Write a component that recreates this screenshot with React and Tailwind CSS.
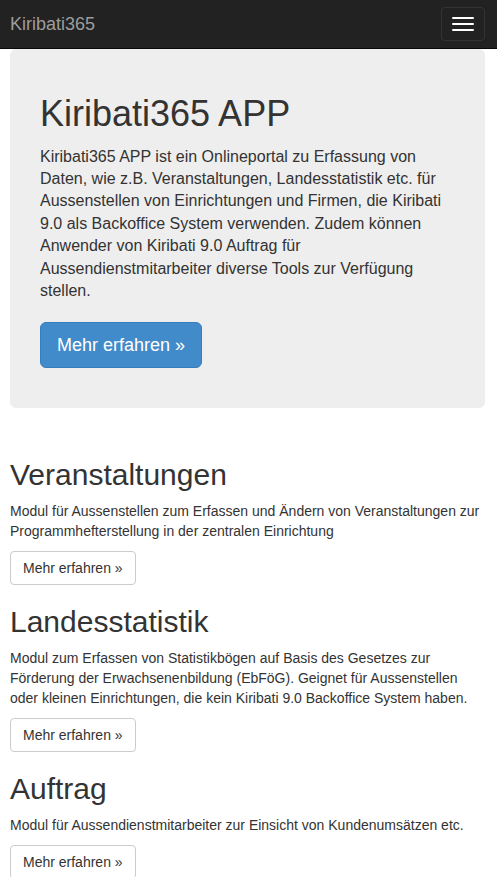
const modules = [
  {
    title: "Veranstaltungen",
    text: "Modul für Aussenstellen zum Erfassen und Ändern von Veranstaltungen zur Programmhefterstellung in der zentralen Einrichtung",
  },
  {
    title: "Landesstatistik",
    text: "Modul zum Erfassen von Statistikbögen auf Basis des Gesetzes zur Förderung der Erwachsenenbildung (EbFöG). Geignet für Aussenstellen oder kleinen Einrichtungen, die kein Kiribati 9.0 Backoffice System haben.",
  },
  {
    title: "Auftrag",
    text: "Modul für Aussendienstmitarbeiter zur Einsicht von Kundenumsätzen etc.",
  },
];

function Navbar() {
  return (
    <nav className="flex h-[49px] items-center justify-between border-b border-[#080808] bg-[#222] pl-[10px] pr-[12px]">
      <a href="#" className="text-[18px] leading-[20px] text-[#9d9d9d]">
        Kiribati365
      </a>
      <button
        type="button"
        className="flex h-[34px] w-[44px] flex-col items-center justify-center gap-[4px] rounded-[4px] border border-[#333]"
      >
        <span className="block h-[2px] w-[22px] rounded-[1px] bg-white" />
        <span className="block h-[2px] w-[22px] rounded-[1px] bg-white" />
        <span className="block h-[2px] w-[22px] rounded-[1px] bg-white" />
      </button>
    </nav>
  );
}

export default function App() {
  return (
    <div className="min-h-screen bg-white text-[#333] font-['Liberation_Sans',Arial,sans-serif]">
      <Navbar />
      <main className="pl-[10px] pr-[12px]">
        <div className="rounded-[6px] bg-[#eee] px-[30px] pb-[40px] pt-[45px]">
          <h1 className="text-[36px] font-normal leading-[1.1]">Kiribati365 APP</h1>
          <p className="mt-[12px] text-[16px] leading-[22.4px]">
            Kiribati365 APP ist ein Onlineportal zu Erfassung von Daten, wie z.B. Veranstaltungen,
            Landesstatistik etc. für Aussenstellen von Einrichtungen und Firmen, die Kiribati 9.0 als
            Backoffice System verwenden. Zudem können Anwender von Kiribati 9.0 Auftrag für
            Aussendienstmitarbeiter diverse Tools zur Verfügung stellen.
          </p>
          <a
            href="#"
            className="mt-[20px] inline-block rounded-[6px] border border-[#357ebd] bg-[#428bca] px-[16px] py-[10px] text-[18px] leading-[24px] text-white"
          >
            Mehr erfahren »
          </a>
        </div>

        <div className="mt-[30px]">
          {modules.map((m) => (
            <section key={m.title} className="pt-[20px]">
              <h2 className="text-[30px] font-normal leading-[1.1]">{m.title}</h2>
              <p className="mt-[10px] text-[14px] leading-[20px]">{m.text}</p>
              <a
                href="#"
                className="mt-[10px] inline-block rounded-[4px] border border-[#ccc] bg-white px-[12px] py-[6px] text-[14px] leading-[20px] text-[#333]"
              >
                Mehr erfahren »
              </a>
            </section>
          ))}
        </div>
      </main>
    </div>
  );
}
